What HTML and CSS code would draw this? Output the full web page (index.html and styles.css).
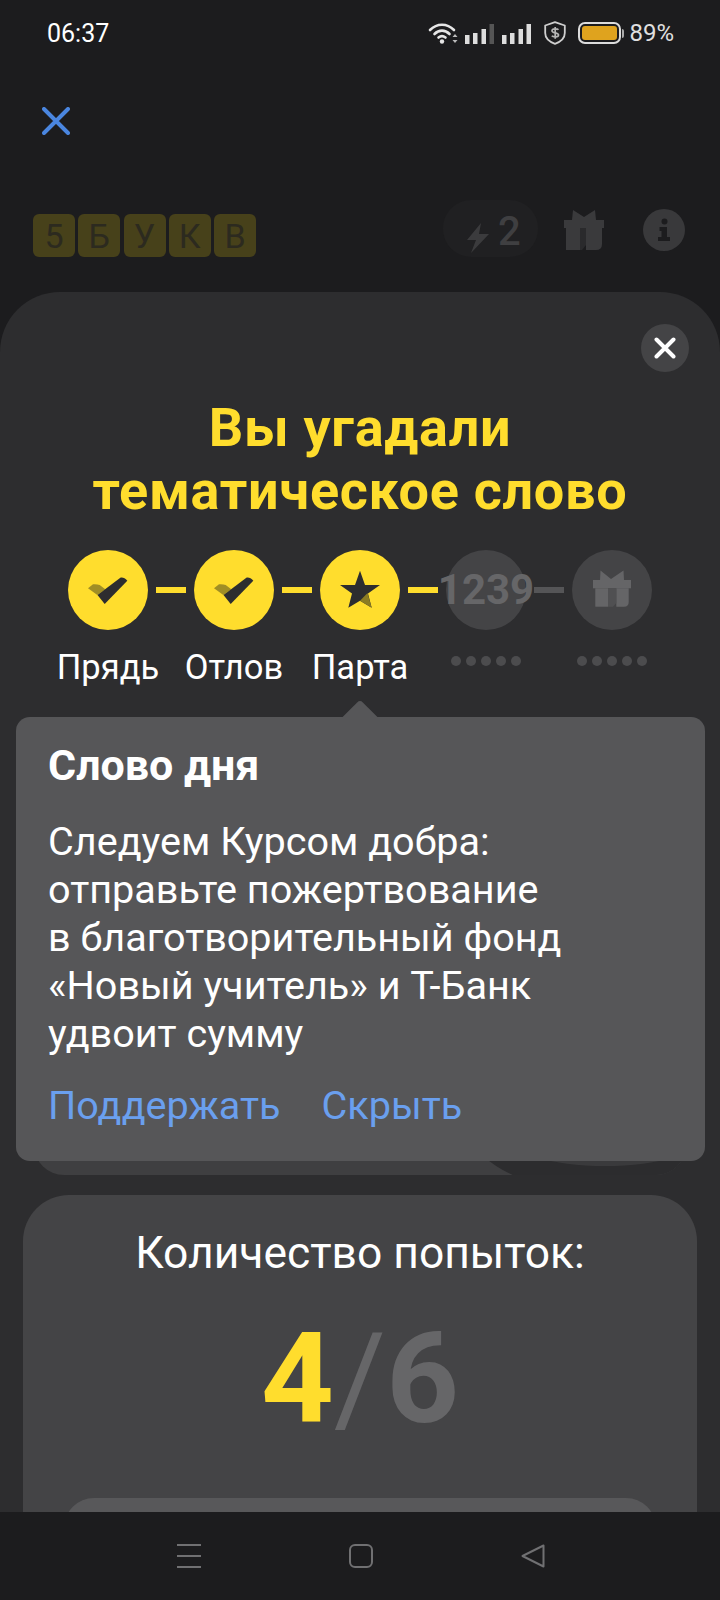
FILE: index.html
```html
<!DOCTYPE html>
<html lang="ru">
<head>
<meta charset="utf-8">
<title>5 букв</title>
<link rel="stylesheet" href="styles.css">
</head>
<body>
<div class="screen">
  <div class="page">
    <header class="status">
      <span class="time">06:37</span>
      <div class="status-icons">
        <svg class="ic-wifi" viewBox="0 0 30 22" width="30" height="22"><g fill="none" stroke="#e6e6e6" stroke-width="2.6" stroke-linecap="round"><path d="M2 8C9 1 19 1 26 8"/><path d="M6.500 12C11 7.500 17 7.500 21.500 12"/><path d="M10.500 15.500C13 13.500 15 13.500 17.500 15.500"/></g><circle cx="14" cy="19.500" r="2.200" fill="#e6e6e6"/><path d="M27 12l2.500 3h-5zM27 21l2.500-3h-5z" fill="#bbb"/></svg>
        <svg class="ic-sig" viewBox="0 0 29 20" width="29" height="20"><rect x="0" y="11" width="4.500" height="9" fill="#ddd"/><rect x="8" y="9" width="4.500" height="11" fill="#ddd"/><rect x="16.500" y="5" width="4.500" height="15" fill="#ddd"/><rect x="24.500" y="0" width="4.500" height="20" fill="#555"/></svg>
        <svg class="ic-sig" viewBox="0 0 29 20" width="29" height="20"><rect x="0" y="11" width="4.500" height="9" fill="#ddd"/><rect x="8" y="9" width="4.500" height="11" fill="#ddd"/><rect x="16.500" y="5" width="4.500" height="15" fill="#ddd"/><rect x="24.500" y="0" width="4.500" height="20" fill="#ddd"/></svg>
        <svg class="ic-shield" viewBox="0 0 22 24" width="22" height="24"><path d="M11 1.200L20.800 4.500V12C20.800 17.500 16 21 11 22.800C6 21 1.200 17.500 1.200 12V4.500Z" fill="none" stroke="#cfcfcf" stroke-width="1.800" stroke-linejoin="round"/><path d="M14.500 8.800C13.500 7.500 8 7.200 8 9.800C8 12.600 14.500 11 14.500 14C14.500 16.500 9 16.200 7.800 14.800M11.200 6V17.800" fill="none" stroke="#b5b5b5" stroke-width="1.700"/></svg>
        <div class="battery"><div class="battery-body"><div class="battery-fill"></div></div><div class="battery-cap"></div></div>
        <span class="pct">89%</span>
      </div>
    </header>

    <div class="toolbar">
      <svg viewBox="0 0 28 28" width="28" height="28"><path d="M2 2L26 26M26 2L2 26" fill="none" stroke="#4a86e0" stroke-width="4" stroke-linecap="round"/></svg>
    </div>

    <div class="app-header">
      <div class="logo">
        <span class="tile">5</span><span class="tile">Б</span><span class="tile">У</span><span class="tile">К</span><span class="tile">В</span>
      </div>
      <div class="app-actions">
        <div class="energy">
          <svg viewBox="0 0 24 32" width="24" height="32"><path d="M15 1L1 18H10L5 31L23 12H13Z" fill="#3b3b3d"/></svg>
          <span class="energy-num">2</span>
        </div>
        <svg class="head-gift" viewBox="0 0 40 40" width="40" height="40"><path d="M9 0L20 7L31 0L32 10H8Z" fill="#3a3a3c"/><rect x="0" y="10" width="40" height="8" fill="#3a3a3c"/><path d="M2 18H16V40H2Z" fill="#3a3a3c"/><path d="M22 18H38V34Q38 40 32 40H22Z" fill="#3a3a3c"/><path d="M16 18H22V35L18 40H16Z" fill="#2a2a2c"/></svg>
        <div class="info"><svg viewBox="0 0 16 24" width="16" height="24"><circle cx="8.500" cy="3.500" r="3" fill="#1c1c1e"/><path d="M3.500 9H11V19H14V23H2V19H5.500V13H3.500Z" fill="#1c1c1e"/></svg></div>
      </div>
    </div>

    <section class="modal">
      <button class="modal-close"><svg viewBox="0 0 22 22" width="22" height="22"><path d="M2.500 2.500L19.500 19.500M19.500 2.500L2.500 19.500" fill="none" stroke="#fff" stroke-width="4" stroke-linecap="round"/></svg></button>
      <h1 class="title">Вы угадали<br>тематическое слово</h1>

      <div class="stepper">
        <div class="step">
          <div class="circle done"><svg viewBox="0 0 60 60" width="60" height="60"><path d="M10 28.300L15 24.300Q19 24 21.700 25L27.300 29.300L19.300 35Z" fill="#a08e25"/><path d="M49.300 20.700C47 18 44 17 42 18L19.500 35L26.700 44Z" fill="#2d2d2f"/></svg></div>
          <div class="line on"></div>
        </div>
        <div class="step">
          <div class="circle done"><svg viewBox="0 0 60 60" width="60" height="60"><path d="M10 28.300L15 24.300Q19 24 21.700 25L27.300 29.300L19.300 35Z" fill="#a08e25"/><path d="M49.300 20.700C47 18 44 17 42 18L19.500 35L26.700 44Z" fill="#2d2d2f"/></svg></div>
          <div class="line on"></div>
        </div>
        <div class="step">
          <div class="circle done"><svg viewBox="0 0 60 60" width="60" height="60"><path d="M30 10.700L35 25H50L38 33.500L41.700 47.700L30 40.700L18.300 47.700L22 33.500L10 25H25Z" fill="#2d2d2f"/><path d="M30 40.700L41.700 47.700L37.500 33Z" fill="#8c7c22"/></svg></div>
          <div class="line on"></div>
        </div>
        <div class="step">
          <div class="circle locked"><span class="count">1239</span></div>
          <div class="line"></div>
        </div>
        <div class="step">
          <div class="circle locked"><svg viewBox="0 0 60 60" width="60" height="60"><path d="M18.500 10.500L29 19L41.500 10.500L42 20H18Z" fill="#656567"/><rect x="11" y="20" width="38" height="8.300" fill="#656567"/><rect x="13.300" y="28.300" width="12.700" height="18.400" fill="#656567"/><path d="M34.300 28.300H46.700V42Q46.700 46.700 42 46.700H34.300Z" fill="#656567"/><path d="M26 28.300H34.300V43L31 46.700H26Z" fill="#505052"/></svg></div>
        </div>
      </div>

      <div class="labels">
        <span class="label">Прядь</span>
        <span class="label">Отлов</span>
        <span class="label">Парта</span>
        <span class="dots"><i></i><i></i><i></i><i></i><i></i></span>
        <span class="dots"><i></i><i></i><i></i><i></i><i></i></span>
      </div>

      <div class="word-card"></div>

      <div class="stats">
        <div class="stats-title">Количество попыток:</div>
        <div class="score"><b class="score-now">4</b><span class="score-sep">/</span><b class="score-max">6</b></div>
        <div class="stats-inner"></div>
      </div>

      <aside class="tip">
        <h2 class="tip-title">Слово дня</h2>
        <p class="tip-body">Следуем Курсом добра:<br>отправьте пожертвование<br>в&nbsp;благотворительный фонд<br>«Новый учитель» и&nbsp;Т-Банк<br>удвоит сумму</p>
        <div class="tip-links"><a class="tip-link">Поддержать</a><a class="tip-link">Скрыть</a></div>
      </aside>
    </section>
  </div>

  <nav class="nav">
    <svg viewBox="0 0 24 24" width="24" height="24"><path d="M0 1H24M0 12H24M0 23H24" stroke="#707072" stroke-width="2" fill="none"/></svg>
    <svg viewBox="0 0 24 24" width="24" height="24"><rect x="1" y="1" width="22" height="22" rx="5" fill="none" stroke="#707072" stroke-width="2"/></svg>
    <svg viewBox="0 0 24 24" width="24" height="24"><path d="M22.500 1.500V22.500L1.500 12Z" fill="none" stroke="#707072" stroke-width="2" stroke-linejoin="round"/></svg>
  </nav>
</div>
</body>
</html>
```
FILE: styles.css
```css
* { box-sizing: border-box; }
html, body { margin: 0; padding: 0; }
body { background: #1c1c1e; color: #fff; font-family: Roboto, "Noto Sans", sans-serif; }

.screen { width: 720px; height: 1600px; display: flex; flex-direction: column; overflow: hidden; }
.page { flex: 1; min-height: 0; display: flex; flex-direction: column; }

/* status bar */
.status { height: 66px; padding: 0 46px 0 47px; display: flex; align-items: center; justify-content: space-between; }
.time { font-size: 25px; color: #fff; }
.status-icons { display: flex; align-items: center; }
.ic-wifi { margin-right: 7px; margin-top: -1px; }
.ic-sig { margin-right: 8px; margin-top: 2px; }
.ic-shield { margin-left: 5px; margin-right: 12px; }
.battery { display: flex; align-items: center; margin-right: 5px; }
.battery-body { width: 43px; height: 22px; border: 2px solid #dcdcdc; border-radius: 7px; padding: 2px; }
.battery-fill { width: 100%; height: 100%; background: #dfa31e; border-radius: 3px; }
.battery-cap { width: 2px; height: 9px; background: #aaa; margin-left: 1px; border-radius: 0 2px 2px 0; }
.pct { font-size: 24px; color: #e0e0e0; }

/* toolbar */
.toolbar { padding: 41px 0 0 42px; height: 134px; flex: none; display: flex; align-items: flex-start; }

/* app header */
.app-header { display: flex; justify-content: space-between; padding: 0 35px 0 33px; height: 57px; flex: none; }
.logo { display: flex; gap: 3.250px; margin-top: 14px; }
.tile { width: 42px; height: 43px; border-radius: 6px; background: #47411a; color: #2c2a1f; font-size: 34px; font-weight: 400; display: flex; align-items: center; justify-content: center; }
.app-actions { display: flex; align-items: flex-start; }
.energy { width: 95px; height: 57px; border-radius: 28px; background: #202022; display: flex; align-items: flex-start; padding: 22px 0 0 23px; gap: 8px; }
.energy-num { font-size: 40px; font-weight: 500; line-height: 30px; color: #3f3f41; margin-top: -5px; }
.head-gift { margin: 10px 0 0 26px; }
.info { width: 42px; height: 42px; border-radius: 50%; background: #39393b; margin: 9px 0 0 39px; display: flex; align-items: center; justify-content: center; }

/* modal */
.modal { position: relative; flex: 1; min-height: 0; margin-top: 35px; background: #2d2d2f; border-radius: 60px 60px 0 0; overflow: hidden; padding-top: 104px; }
.modal-close { position: absolute; top: 32px; right: 31px; width: 48px; height: 48px; border: 0; padding: 0; border-radius: 50%; background: #444446; display: flex; align-items: center; justify-content: center; }
.title { margin: 0; text-align: center; color: #ffdd2d; font-size: 54px; line-height: 63px; font-weight: 700; letter-spacing: 0.700px; }

.stepper { display: flex; padding-left: 68px; margin-top: 28px; }
.step { display: flex; align-items: center; }
.circle { width: 80px; height: 80px; border-radius: 50%; flex: none; display: flex; align-items: center; justify-content: center; }
.done { background: #ffdd2d; }
.locked { background: #444446; }
.line { width: 30px; height: 6px; margin: 0 8px; background: #555557; }
.line.on { background: #ffdd2d; }
.count { font-size: 42px; line-height: 1; font-weight: 700; color: #666668; white-space: nowrap; }

.labels { display: grid; grid-template-columns: repeat(5, 126px); padding-left: 45px; margin-top: 17px; height: 40px; align-items: center; }
.label { text-align: center; font-size: 34.500px; line-height: 40px; white-space: nowrap; }
.dots { display: flex; justify-content: center; gap: 5px; margin-bottom: 12px; }
.dots i { width: 10px; height: 10px; border-radius: 50%; background: #4c4c4e; }

/* card mostly hidden by the tooltip: only its lower edge shows */
.word-card { position: relative; isolation: isolate; overflow: hidden; height: 448px; margin: 40px 34px 0; background: #3f3f41; border-radius: 0 0 30px 30px; }
.word-card::after { content: ""; position: absolute; left: 437px; bottom: -20px; width: 298px; height: 130px; border-radius: 50%; background: #2c2c2e; }
.word-card::before { content: ""; position: absolute; z-index: 1; left: 471px; bottom: 9px; width: 200px; height: 62px; border-radius: 50%; background: #3a3a3c; }

.stats { margin: 20px 23px 0; height: 400px; background: #444446; border-radius: 46px; padding-top: 30px; }
.stats-title { text-align: center; font-size: 44.400px; line-height: 56px; }
.score { text-align: center; margin-top: 23px; height: 150px; font-size: 127px; line-height: 150px; }
.score-now { color: #ffdd2d; font-weight: 700; }
.score-sep { color: #666668; font-weight: 400; }
.score-max { color: #666668; font-weight: 700; }
.stats-inner { margin: 44px 41px 0; height: 200px; background: #58585a; border-radius: 30px; }

/* tooltip */
.tip { position: absolute; left: 16px; top: 425px; width: 689px; background: #565658; border-radius: 14px; padding: 26px 32px 31px; }
.tip::before { content: ""; position: absolute; left: 331px; top: -12px; width: 26px; height: 26px; background: #565658; transform: rotate(45deg); border-radius: 4px 0 0 0; }
.tip-title { margin: 0; font-size: 43px; line-height: 44px; font-weight: 700; }
.tip-body { margin: 31px 0 0; font-size: 39.600px; line-height: 48px; }
.tip-links { display: flex; gap: 41px; margin-top: 24px; }
.tip-link { font-size: 39.600px; line-height: 48px; color: #6a9fee; }

/* bottom nav */
.nav { height: 88px; flex: none; background: #1c1c1e; padding: 32px 0 0 177px; display: flex; align-items: flex-start; gap: 148px; position: relative; z-index: 2; }
```
